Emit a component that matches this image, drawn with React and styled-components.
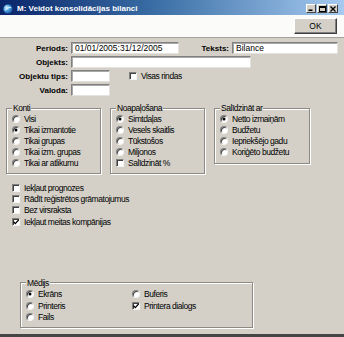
import React from 'react';
import styled, { createGlobalStyle } from 'styled-components';

const GlobalStyle = createGlobalStyle`
  html,
  body {
    margin: 0;
    padding: 0;
    background: #d4d0c8;
  }
`;

const StyledWindow = styled.div`
  width: 344px;
  height: 337px;
  box-sizing: border-box;
  display: flex;
  flex-direction: column;
  background: #d4d0c8;
  border-bottom: 3px solid #454545;
  font-family: 'Liberation Sans', Arial, sans-serif;
  font-size: 8.5px;
  letter-spacing: -0.45px;
  color: #000;
  overflow: hidden;
`;

const TitleBar = styled.div`
  height: 15px;
  box-sizing: border-box;
  padding: 2px 6px 0 3px;
  display: flex;
  align-items: center;
  gap: 4px;
  background: linear-gradient(to right, #0a246a 0%, #3a6ea5 45%, #a6caf0 100%);
  color: #fff;

  .title {
    flex: 1;
    font-size: 8px;
    font-weight: bold;
    letter-spacing: 0;
    white-space: nowrap;
  }
`;

const WinButtons = styled.div`
  display: flex;
  gap: 1px;
`;

const WinButton = styled.span`
  width: 10px;
  height: 9px;
  box-sizing: border-box;
  display: flex;
  align-items: center;
  justify-content: center;
  background: #d4d0c8;
  border: 1px solid;
  border-color: #fff #404040 #404040 #fff;
`;

const Toolbar = styled.div`
  height: 23px;
  box-sizing: border-box;
  display: flex;
  justify-content: flex-end;
  align-items: flex-start;
  padding: 3px 7px 0 0;
  background: #fbfbfa;
  border-bottom: 1px solid #a4a09a;
`;

const Button = styled.button`
  width: 43px;
  height: 16px;
  padding: 0;
  background: #d4d0c8;
  border: 1px solid;
  border-color: #fff #404040 #404040 #fff;
  box-shadow: inset -1px -1px 0 #808080;
  font-family: inherit;
  font-size: 8.5px;
  color: #000;
`;

const Body = styled.div`
  flex: 1;
  display: flex;
  flex-direction: column;
  padding: 4px 6px 6px 6px;
`;

const FormRows = styled.div`
  display: flex;
  flex-direction: column;
  gap: 2px;
`;

const Row = styled.div`
  display: flex;
  align-items: center;
  height: 12px;
`;

const Label = styled.span`
  width: ${({ $w }) => $w || 62}px;
  flex-shrink: 0;
  margin-right: 3px;
  text-align: right;
  font-size: 8px;
  font-weight: bold;
  letter-spacing: 0;
  white-space: nowrap;
`;

const TextInput = styled.input`
  width: ${({ $w }) => ($w ? `${$w}px` : 'auto')};
  flex: ${({ $w }) => ($w ? '0 0 auto' : '1')};
  min-width: 0;
  height: 12px;
  box-sizing: border-box;
  margin: 0;
  padding: 0 3px;
  background: #fff;
  border: 1px solid;
  border-color: #808080 #e4e2dc #e4e2dc #808080;
  box-shadow: inset 1px 1px 0 #a8a8a8;
  font-family: 'Liberation Sans', Arial, sans-serif;
  font-size: 8.5px;
  color: #000;
  outline: none;
`;

const GroupsRow = styled.div`
  display: flex;
  align-items: flex-start;
  gap: 9px;
  margin-top: 7px;
`;

const GroupBox = styled.fieldset`
  width: ${({ $w }) => $w}px;
  box-sizing: border-box;
  min-width: 0;
  margin: 0 0 0 ${({ $ml }) => $ml || 0}px;
  padding: ${({ $pt }) => $pt || 0}px 4px ${({ $pb }) => $pb}px 5px;
  border: 1px solid #8c8a85;
  box-shadow: inset 1px 1px 0 #fff, 1px 1px 0 #fff;

  legend {
    padding: 0 1px;
    line-height: 10px;
    background: #d4d0c8;
  }
`;

const OptionGrid = styled.div`
  display: grid;
  grid-template-columns: ${({ $cols }) => $cols || '1fr'};
  grid-auto-rows: ${({ $rh }) => $rh || 11}px;
`;

const Option = styled.div`
  display: flex;
  align-items: center;
  gap: 4px;
  white-space: nowrap;
`;

const RadioMark = styled.span`
  width: 8px;
  height: 8px;
  box-sizing: border-box;
  flex-shrink: 0;
  display: flex;
  align-items: center;
  justify-content: center;
  border-radius: 50%;
  background: #fff;
  border: 1px solid;
  border-color: #808080 #f4f4f4 #f4f4f4 #808080;
  box-shadow: inset 1px 1px 0 #404040;

  &::after {
    content: '';
    width: 2px;
    height: 2px;
    border-radius: 50%;
    background: ${({ $on }) => ($on ? '#000' : 'transparent')};
    box-shadow: 0 0 0 0.5px ${({ $on }) => ($on ? '#000' : 'transparent')};
  }
`;

const CheckMark = styled.span`
  width: 8px;
  height: 8px;
  box-sizing: border-box;
  flex-shrink: 0;
  display: flex;
  align-items: center;
  justify-content: center;
  background: #fff;
  border: 1px solid;
  border-color: #808080 #f4f4f4 #f4f4f4 #808080;
  box-shadow: inset 1px 1px 0 #404040;
`;

const CheckList = styled.div`
  display: flex;
  flex-direction: column;
  margin: 8px 0 0 6px;

  ${Option} {
    height: 11.4px;
  }
`;

const Gap = styled.span`
  flex: 0 0 ${({ $w }) => $w}px;
`;

const Spacer = styled.div`
  flex: 1;
`;

const AppIcon = () => (
  <svg width="10" height="10" viewBox="0 0 10 10">
    <defs>
      <radialGradient id="gl" cx="0.35" cy="0.35" r="0.7">
        <stop offset="0" stopColor="#d8f0ff" />
        <stop offset="0.5" stopColor="#4aa0e0" />
        <stop offset="1" stopColor="#1a4f9a" />
      </radialGradient>
    </defs>
    <circle cx="5" cy="5" r="4.6" fill="url(#gl)" />
    <path d="M2.2 6.5 C3.5 4 6 3.2 8 3.6" stroke="#fff" strokeWidth="0.9" fill="none" />
  </svg>
);

const Radio = ({ on, children }) => (
  <Option>
    <RadioMark $on={on} />
    <span>{children}</span>
  </Option>
);

const Check = ({ on, children }) => (
  <Option>
    <CheckMark>
      {on && (
        <svg width="6" height="6" viewBox="0 0 6 6">
          <path d="M0.5 2.8 L2.3 4.6 L5.6 1" stroke="#000" strokeWidth="1.3" fill="none" />
        </svg>
      )}
    </CheckMark>
    <span>{children}</span>
  </Option>
);

const App = () => (
  <>
    <GlobalStyle />
    <StyledWindow>
      <TitleBar>
        <AppIcon />
        <span className="title">M: Veidot konsolidācijas bilanci</span>
        <WinButtons>
          <WinButton>
            <svg width="6" height="5" viewBox="0 0 6 5">
              <rect x="0.5" y="3.5" width="4" height="1.5" fill="#000" />
            </svg>
          </WinButton>
          <WinButton>
            <svg width="7" height="6" viewBox="0 0 7 6">
              <rect x="0.5" y="0.5" width="6" height="5" fill="none" stroke="#000" />
              <rect x="0.5" y="0.5" width="6" height="1.5" fill="#000" />
            </svg>
          </WinButton>
          <WinButton>
            <svg width="6" height="6" viewBox="0 0 6 6">
              <path d="M0.5 0.5 L5.5 5.5 M5.5 0.5 L0.5 5.5" stroke="#000" strokeWidth="1.3" />
            </svg>
          </WinButton>
        </WinButtons>
      </TitleBar>

      <Toolbar>
        <Button>OK</Button>
      </Toolbar>

      <Body>
        <FormRows>
          <Row>
            <Label>Periods:</Label>
            <TextInput $w={108} readOnly value="01/01/2005:31/12/2005" />
            <Label $w={50}>Teksts:</Label>
            <TextInput readOnly value="Bilance" />
          </Row>
          <Row>
            <Label>Objekts:</Label>
            <TextInput $w={180} readOnly value="" />
          </Row>
          <Row>
            <Label>Objektu tips:</Label>
            <TextInput $w={39} readOnly value="" />
            <Gap $w={19} />
            <Check>Visas rindas</Check>
          </Row>
          <Row>
            <Label>Valoda:</Label>
            <TextInput $w={39} readOnly value="" />
          </Row>
        </FormRows>

        <GroupsRow>
          <GroupBox $w={95} $pb={5}>
            <legend>Konti</legend>
            <OptionGrid>
              <Radio>Visi</Radio>
              <Radio on>Tikai izmantotie</Radio>
              <Radio>Tikai grupas</Radio>
              <Radio>Tikai izm. grupas</Radio>
              <Radio>Tikai ar atlikumu</Radio>
            </OptionGrid>
          </GroupBox>
          <GroupBox $w={95} $pb={5}>
            <legend>Noapaļošana</legend>
            <OptionGrid>
              <Radio on>Simtdaļas</Radio>
              <Radio>Vesels skaitlis</Radio>
              <Radio>Tūkstošos</Radio>
              <Radio>Miljonos</Radio>
              <Check>Salīdzināt %</Check>
            </OptionGrid>
          </GroupBox>
          <GroupBox $w={96} $pb={6}>
            <legend>Salīdzināt ar</legend>
            <OptionGrid>
              <Radio on>Netto izmaiņām</Radio>
              <Radio>Budžetu</Radio>
              <Radio>Iepriekšējo gadu</Radio>
              <Radio>Koriģēto budžetu</Radio>
            </OptionGrid>
          </GroupBox>
        </GroupsRow>

        <CheckList>
          <Check>Iekļaut prognozes</Check>
          <Check>Rādīt reģistrētos grāmatojumus</Check>
          <Check>Bez virsraksta</Check>
          <Check on>Iekļaut meitas kompānijas</Check>
        </CheckList>

        <Spacer />

        <GroupBox $w={233} $ml={14} $pt={1} $pb={4}>
          <legend>Mēdijs</legend>
          <OptionGrid $cols="106px 1fr" $rh={11.5}>
            <Radio on>Ekrāns</Radio>
            <Radio>Buferis</Radio>
            <Radio>Printeris</Radio>
            <Check on>Printera dialogs</Check>
            <Radio>Fails</Radio>
          </OptionGrid>
        </GroupBox>
      </Body>
    </StyledWindow>
  </>
);

export default App;
